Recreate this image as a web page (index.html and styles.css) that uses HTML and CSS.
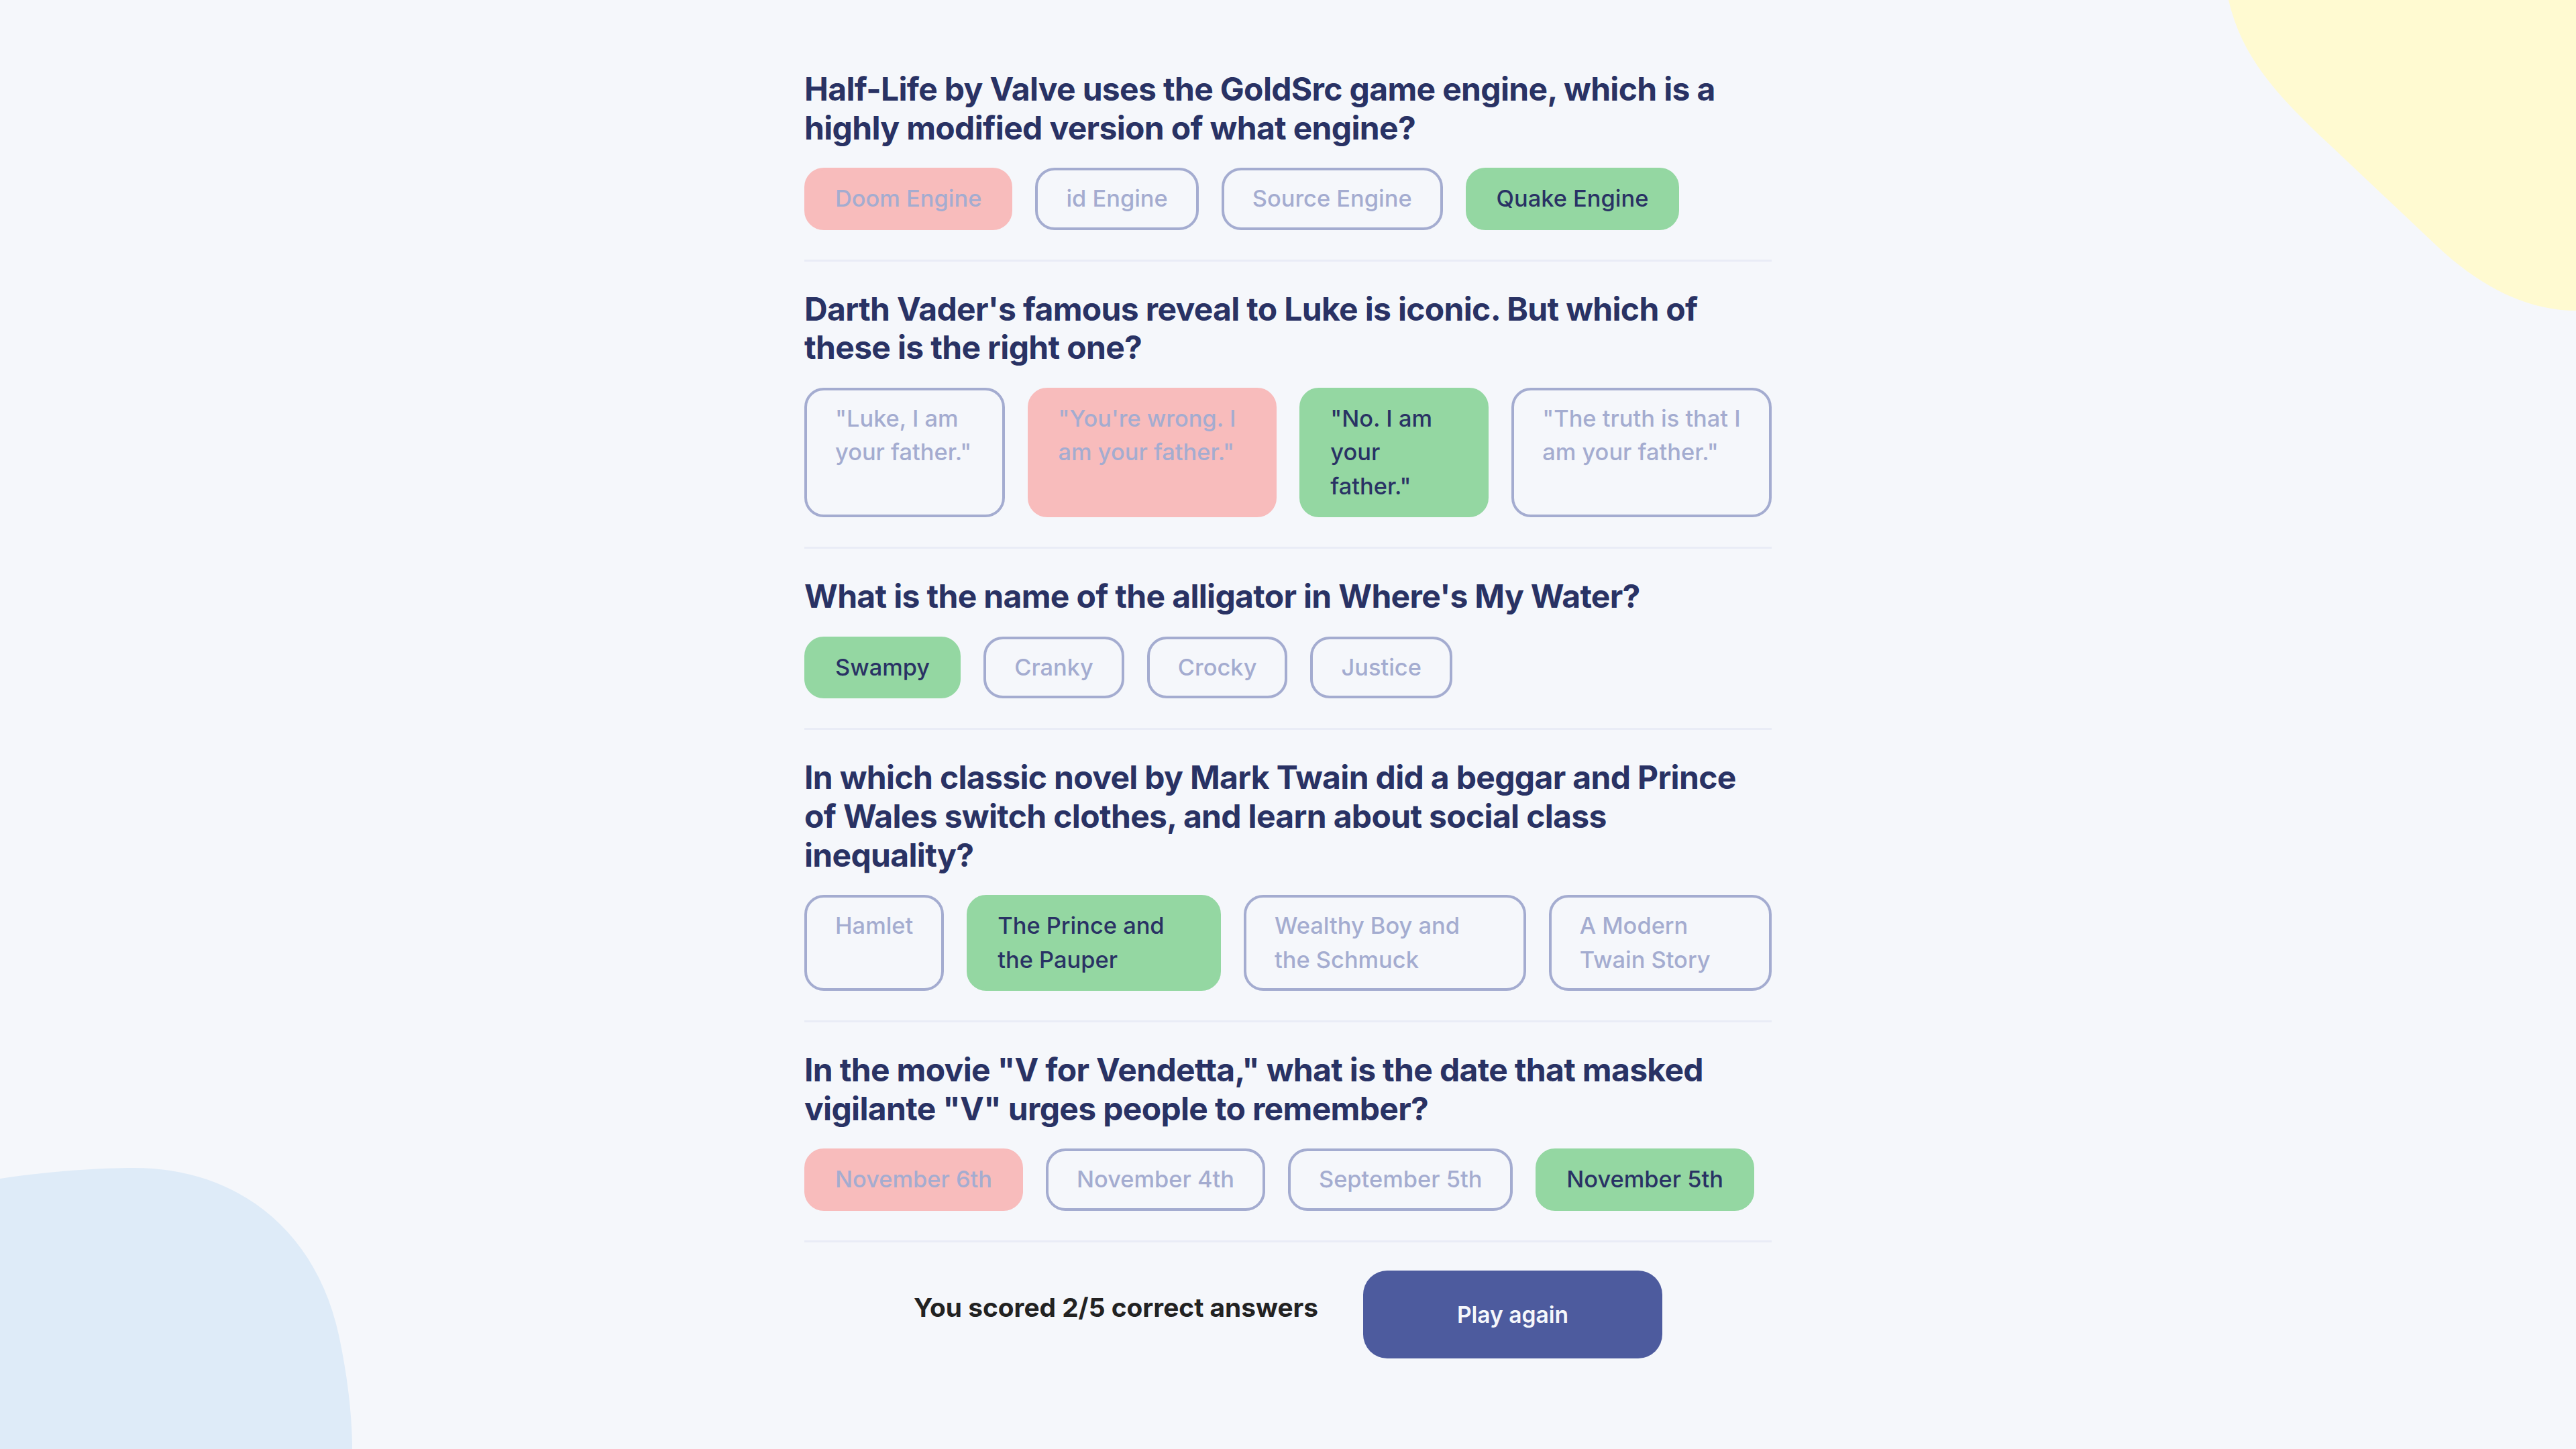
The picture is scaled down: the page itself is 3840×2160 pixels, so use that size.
FILE: index.html
```html
<!DOCTYPE html>
<html lang="en">
<head>
<meta charset="utf-8">
<title>Quizzical</title>
<link rel="stylesheet" href="styles.css">
</head>
<body>
<svg class="blob blob-yellow" width="518" height="463" viewBox="0 0 518 463" aria-hidden="true">
  <path d="M0,0 C20,85 70,140 150,215 L311,367 C378,430 448,463 518,463 L518,0 Z" fill="#FFFAD1"/>
</svg>
<svg class="blob blob-blue" width="530" height="460" viewBox="0 0 530 460" aria-hidden="true">
  <path d="M0,57 C80,45 150,41 200,41 C350,41 470,130 505,290 C520,360 525,420 525,460 L0,460 Z" fill="#DEEBF8"/>
</svg>

<main class="quiz">
  <section class="question">
    <h2 class="question-title">Half-Life by Valve uses the GoldSrc game engine, which is a highly modified version of what engine?</h2>
    <div class="answers">
      <div class="answer wrong" role="button">Doom Engine</div>
      <div class="answer" role="button">id Engine</div>
      <div class="answer" role="button">Source Engine</div>
      <div class="answer correct" role="button">Quake Engine</div>
    </div>
  </section>

  <section class="question">
    <h2 class="question-title">Darth Vader's famous reveal to Luke is iconic. But which of these is the right one?</h2>
    <div class="answers">
      <div class="answer" role="button">"Luke, I am your father."</div>
      <div class="answer wrong" role="button">"You're wrong. I am your father."</div>
      <div class="answer correct" role="button">"No. I am your father."</div>
      <div class="answer" role="button">"The truth is that I am your father."</div>
    </div>
  </section>

  <section class="question">
    <h2 class="question-title">What is the name of the alligator in Where's My Water?</h2>
    <div class="answers">
      <div class="answer correct" role="button">Swampy</div>
      <div class="answer" role="button">Cranky</div>
      <div class="answer" role="button">Crocky</div>
      <div class="answer" role="button">Justice</div>
    </div>
  </section>

  <section class="question">
    <h2 class="question-title">In which classic novel by Mark Twain did a beggar and Prince of Wales switch clothes, and learn about social class inequality?</h2>
    <div class="answers">
      <div class="answer" role="button">Hamlet</div>
      <div class="answer correct" role="button">The Prince and the Pauper</div>
      <div class="answer" role="button">Wealthy Boy and the Schmuck</div>
      <div class="answer" role="button">A Modern Twain Story</div>
    </div>
  </section>

  <section class="question">
    <h2 class="question-title">In the movie "V for Vendetta," what is the date that masked vigilante "V" urges people to remember?</h2>
    <div class="answers">
      <div class="answer wrong" role="button">November 6th</div>
      <div class="answer" role="button">November 4th</div>
      <div class="answer" role="button">September 5th</div>
      <div class="answer correct" role="button">November 5th</div>
    </div>
  </section>

  <div class="result">
    <p class="score">You scored 2/5 correct answers</p>
    <button class="play-btn">Play again</button>
  </div>
</main>
</body>
</html>
```

FILE: styles.css
```css
* {
  box-sizing: border-box;
}

html, body {
  height: 100%;
}

body {
  margin: 0;
  background: #F5F7FB;
  font-family: "Inter", "Noto Sans", sans-serif;
  color: #293264;
  position: relative;
  overflow: hidden;
}

.blob {
  position: absolute;
  z-index: 0;
  display: block;
}

.blob-yellow {
  top: 0;
  right: 0;
}

.blob-blue {
  bottom: 0;
  left: 0;
}

.quiz {
  position: relative;
  z-index: 1;
  width: 1442px;
  margin: 0 auto;
  padding-top: 104px;
}

.question {
  padding-bottom: 44px;
  border-bottom: 3px solid #E9ECF6;
  margin-bottom: 42px;
}

.question-title {
  margin: 0;
  font-size: 48px;
  line-height: 1.2;
  font-weight: 700;
  letter-spacing: -0.67px;
  color: #293264;
}

.answers {
  display: flex;
  gap: 34px;
  margin-top: 31px;
}

.answer {
  flex: 0 1 auto;
  font-size: 34.4px;
  font-weight: 500;
  line-height: 50.5px;
  padding: 17px 42px;
  border: 4.8px solid #A4ACD0;
  border-radius: 29px;
  background: transparent;
  color: #A4ACD0;
  cursor: pointer;
}

.answer.wrong {
  background: #F8BCBC;
  border-color: #F8BCBC;
  color: #A4ACD0;
}

.answer.correct {
  background: #94D7A2;
  border-color: #94D7A2;
  color: #293264;
}

.result {
  display: flex;
  justify-content: center;
  align-items: center;
  gap: 67px;
}

.score {
  margin: 0 0 21px;
  font-size: 38.8px;
  font-weight: 700;
  color: #222222;
}

.play-btn {
  width: 446px;
  padding: 45px 0;
  border: none;
  border-radius: 36px;
  background: #4D5B9E;
  color: #F5F7FB;
  font-family: "Inter", "Noto Sans", sans-serif;
  font-size: 33.6px;
  font-weight: 600;
  cursor: pointer;
}
```
